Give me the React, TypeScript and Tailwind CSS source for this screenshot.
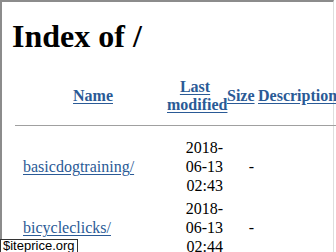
const rows = [
  { name: "basicdogtraining/", date: ["2018-", "06-13", "02:43"] },
  { name: "bicycleclicks/", date: ["2018-", "06-13", "02:44"] },
];

const linkCls = "text-[#2a5a96] underline underline-offset-[2px]";

const App = () => {
  return (
    <div className="relative h-[252px] w-[336px] overflow-hidden bg-white">
      <div className="h-full w-[334px] border-l-2 border-t-2 border-r border-[#8c8c8c] border-r-[#dedede] pl-[10px] font-['Liberation_Serif',serif] text-[16px] leading-[normal] text-black">
        <h1 className="mt-[16px] text-[32px] font-bold leading-[normal]">Index of /</h1>

        <table className="mt-[20px] w-[360px] table-fixed border-separate border-spacing-[2px]">
          <colgroup>
            <col className="w-[6px]" />
            <col className="w-[142px]" />
            <col className="w-[58px]" />
            <col className="w-[29px]" />
            <col className="w-[115px]" />
          </colgroup>
          <tbody>
            <tr>
              <th className="p-[1px]"></th>
              <th className="p-[1px] font-bold">
                <a href="#" className={linkCls}>Name</a>
              </th>
              <th className="p-[1px] font-bold">
                <a href="#" className={linkCls}>Last modified</a>
              </th>
              <th className="p-[1px] font-bold">
                <a href="#" className={linkCls}>Size</a>
              </th>
              <th className="p-[1px] text-left font-bold whitespace-nowrap">
                <a href="#" className={linkCls}>Description</a>
              </th>
            </tr>
            <tr>
              <th colSpan={5} className="p-[1px]">
                <div className="mt-[7px] mb-[8px] border-t border-[#a0a0a0]" />
              </th>
            </tr>
            {rows.map((r) => (
              <tr key={r.name} className="leading-[19px]">
                <td className="p-[1px]"></td>
                <td className="p-[1px] align-middle">
                  <a href="#" className="text-[#2a5a96] underline underline-offset-[2px]">{r.name}</a>
                </td>
                <td className="p-[1px] text-right align-middle">
                  {r.date.map((d) => (
                    <div key={d}>{d}</div>
                  ))}
                </td>
                <td className="p-[1px] text-right align-middle">-</td>
                <td className="p-[1px]">&nbsp;</td>
              </tr>
            ))}
          </tbody>
        </table>
      </div>

      <div className="absolute bottom-[-1px] left-0 border border-[#333] bg-white px-[2px] font-['Liberation_Sans',sans-serif] text-[13px] leading-[12px] text-black">
        $iteprice.org
      </div>
    </div>
  );
};

export default App;
